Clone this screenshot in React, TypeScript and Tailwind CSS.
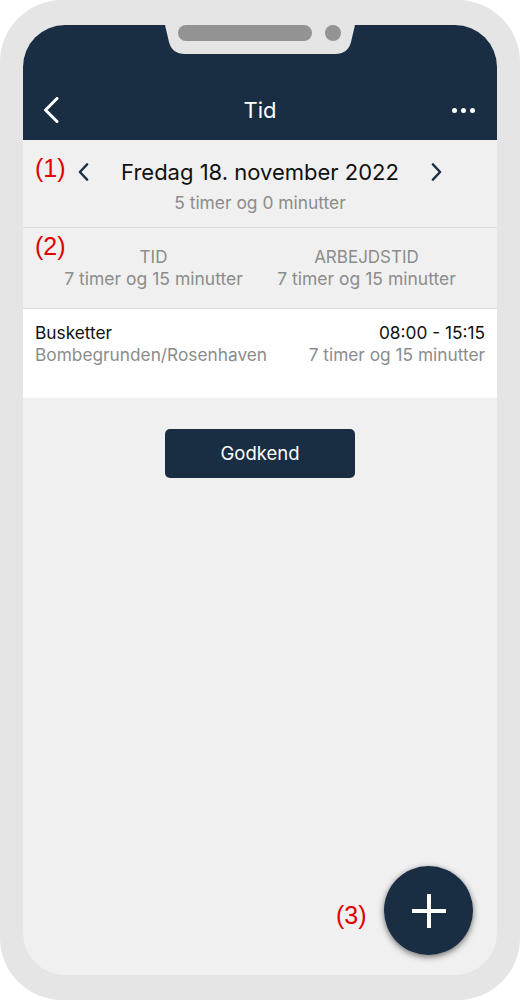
import React from "react";

const navy = "bg-[#1a2e43]";

const Chevron = ({ dir, className }: { dir: "left" | "right"; className: string }) => (
  <svg viewBox="0 0 12 20" className={className} fill="none">
    <path
      d={dir === "left" ? "M10 1.5 L2 10 L10 18.5" : "M2 1.5 L10 10 L2 18.5"}
      stroke="currentColor"
      strokeWidth="2.6"
      strokeLinecap="round"
      strokeLinejoin="round"
    />
  </svg>
);

const Note = ({ children, className }: { children: string; className: string }) => (
  <span className={`absolute font-['Liberation_Sans',Arial,sans-serif] text-[25px] leading-[28px] text-[#e00000] ${className}`}>
    {children}
  </span>
);

export default function App() {
  return (
    <div className="w-[520px] h-[1000px] bg-white font-['Inter','Liberation_Sans',sans-serif]">
      <div className="h-full rounded-[62px] bg-[#e5e5e5] px-[23px] py-[25px]">
        <div className="relative h-full flex flex-col overflow-hidden rounded-[42px] bg-[#f0f0f0]">
          {/* notch */}
          <svg viewBox="0 0 190 30" className="absolute top-0 left-[142px] w-[190px] h-[30px]">
            <path d="M0 0 L190 0 L186 17 Q183 29 170 29 L20 29 Q7 29 4 17 Z" fill="#e5e5e5" />
            <rect x="13" y="0" width="134" height="16" rx="8" fill="#939393" />
            <circle cx="168" cy="8" r="8" fill="#939393" />
          </svg>

          {/* header */}
          <div className={`${navy} h-[115px] flex items-end pb-[5px] shrink-0`}>
            <div className="w-full h-[50px] flex items-center px-[20px] text-white">
              <div className="w-[40px]">
                <svg viewBox="0 0 16 26" className="w-[16px] h-[26px]" fill="none">
                  <path d="M14 1.5 L2.5 13 L14 24.5" stroke="white" strokeWidth="3" strokeLinecap="round" strokeLinejoin="round" />
                </svg>
              </div>
              <div className="flex-1 text-center text-[22px]">Tid</div>
              <div className="w-[40px] flex justify-end gap-[4px] pr-[2px]">
                <span className="w-[5px] h-[5px] rounded-full bg-white" />
                <span className="w-[5px] h-[5px] rounded-full bg-white" />
                <span className="w-[5px] h-[5px] rounded-full bg-white" />
              </div>
            </div>
          </div>

          {/* date */}
          <div className="relative border-b border-[#dcdcdc] pt-[18px] pb-[14px]">
            <Note className="left-[12px] top-[14px]">(1)</Note>
            <div className="h-[28px] flex items-center justify-between px-[55px] text-[#1a2e43]">
              <Chevron dir="left" className="w-[11px] h-[18px]" />
              <span className="text-[22px] text-[#111]">Fredag 18. november 2022</span>
              <Chevron dir="right" className="w-[11px] h-[18px]" />
            </div>
            <div className="mt-[7px] text-center text-[17.4px] leading-[20px] text-[#8c8c8c]">5 timer og 0 minutter</div>
          </div>

          {/* totals */}
          <div className="relative border-b border-[#dcdcdc] py-[18px] px-[24px] grid grid-cols-2 text-center text-[17.5px] leading-[22px] text-[#8c8c8c]">
            <Note className="left-[12px] top-[4px]">(2)</Note>
            <div>
              <div className="text-[17px]">TID</div>
              <div>7 timer og 15 minutter</div>
            </div>
            <div>
              <div className="text-[17px]">ARBEJDSTID</div>
              <div>7 timer og 15 minutter</div>
            </div>
          </div>

          {/* entry */}
          <div className="bg-white pt-[13px] pb-[32px] px-[12px] flex justify-between text-[17.3px] leading-[22px]">
            <div>
              <div className="text-[#111]">Busketter</div>
              <div className="text-[#8c8c8c]">Bombegrunden/Rosenhaven</div>
            </div>
            <div className="text-right">
              <div className="text-[#111]">08:00 - 15:15</div>
              <div className="text-[#8c8c8c]">7 timer og 15 minutter</div>
            </div>
          </div>

          <button className={`${navy} mt-[31px] mx-auto w-[190px] h-[49px] rounded-[5px] text-white text-[18.5px]`}>
            Godkend
          </button>

          <Note className="left-[313px] bottom-[46px]">(3)</Note>
          <button
            className={`${navy} absolute right-[24px] bottom-[20px] w-[89px] h-[89px] rounded-full flex items-center justify-center shadow-[0_2px_6px_rgba(0,0,0,0.55)]`}
          >
            <svg viewBox="0 0 34 34" className="w-[34px] h-[34px]">
              <path d="M17 0 V34 M0 17 H34" stroke="white" strokeWidth="4" />
            </svg>
          </button>
        </div>
      </div>
    </div>
  );
}
